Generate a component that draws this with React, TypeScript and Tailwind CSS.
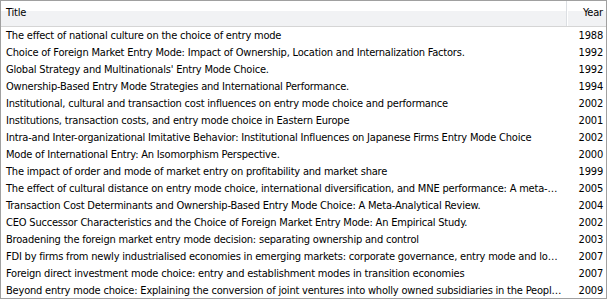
import React from "react";

// rows of the publication list: title + year
const rows: { title: string; year: number }[] = [
  { title: "The effect of national culture on the choice of entry mode", year: 1988 },
  { title: "Choice of Foreign Market Entry Mode: Impact of Ownership, Location and Internalization Factors.", year: 1992 },
  { title: "Global Strategy and Multinationals' Entry Mode Choice.", year: 1992 },
  { title: "Ownership-Based Entry Mode Strategies and International Performance.", year: 1994 },
  { title: "Institutional, cultural and transaction cost influences on entry mode choice and performance", year: 2002 },
  { title: "Institutions, transaction costs, and entry mode choice in Eastern Europe", year: 2001 },
  { title: "Intra-and Inter-organizational Imitative Behavior: Institutional Influences on Japanese Firms Entry Mode Choice", year: 2002 },
  { title: "Mode of International Entry: An Isomorphism Perspective.", year: 2000 },
  { title: "The impact of order and mode of market entry on profitability and market share", year: 1999 },
  { title: "The effect of cultural distance on entry mode choice, international diversification, and MNE performance: A meta-analysis", year: 2005 },
  { title: "Transaction Cost Determinants and Ownership-Based Entry Mode Choice: A Meta-Analytical Review.", year: 2004 },
  { title: "CEO Successor Characteristics and the Choice of Foreign Market Entry Mode: An Empirical Study.", year: 2002 },
  { title: "Broadening the foreign market entry mode decision: separating ownership and control", year: 2003 },
  { title: "FDI by firms from newly industrialised economies in emerging markets: corporate governance, entry mode and location", year: 2007 },
  { title: "Foreign direct investment mode choice: entry and establishment modes in transition economies", year: 2007 },
  { title: "Beyond entry mode choice: Explaining the conversion of joint ventures into wholly owned subsidiaries in the People's Republic of China", year: 2009 },
];

export default function App() {
  return (
    <div
      className="w-[607px] h-[299px] overflow-hidden bg-white border border-[#a0a0a0] text-[11px] text-black font-stretch-condensed tracking-[-0.2px]"
      style={{ fontFamily: '"DejaVu Sans Condensed", "DejaVu Sans", sans-serif' }}
    >
      {/* header */}
      <div className="flex h-[26px] shrink-0 border-b border-[#d5d5d5] bg-[linear-gradient(to_bottom,#ffffff_0,#ffffff_42%,#f1f2f4_42%,#f1f2f4_100%)]">
        <div className="w-[566px] shrink-0 flex items-center pl-[5px] border-r border-[#dcdfe3]">
          Title
        </div>
        <div className="flex-1 flex items-center justify-end pr-[3px] border-l border-white">
          Year
        </div>
      </div>

      {/* body */}
      <div className="flex flex-col">
        {rows.map((r, i) => (
          <div key={i} className="flex h-[17px] items-center shrink-0">
            <div className="w-[567px] shrink-0 pl-[5px] pr-[6px] truncate leading-[17px]">
              {r.title}
            </div>
            <div className="flex-1 text-right pr-[3px] leading-[17px]">{r.year}</div>
          </div>
        ))}
      </div>
    </div>
  );
}
